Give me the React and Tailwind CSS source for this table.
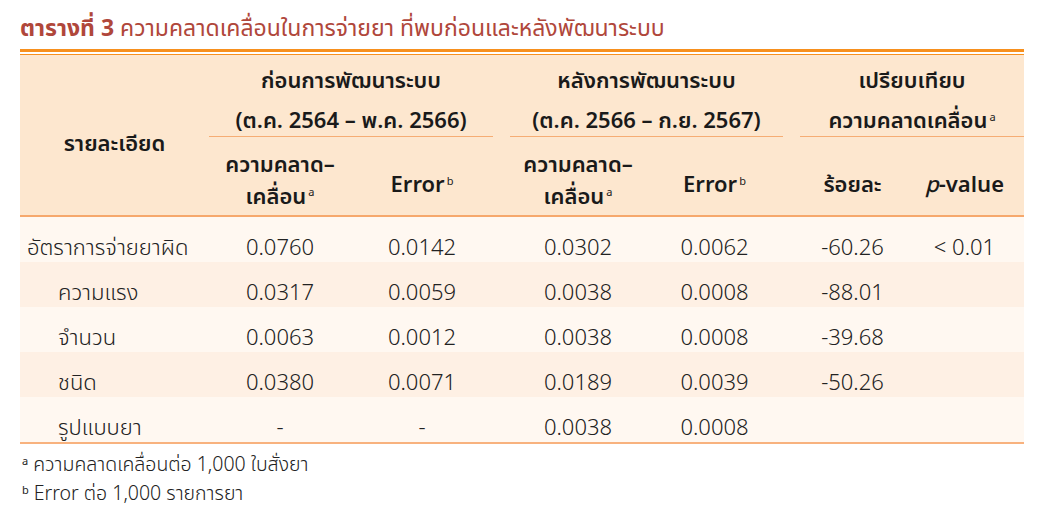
import React from "react";

const font = { fontFamily: '"Noto Sans Thai", "Noto Sans", "Liberation Sans", sans-serif' };

const rows = [
  { label: "อัตราการจ่ายยาผิด", indent: false, v: ["0.0760", "0.0142", "0.0302", "0.0062", "-60.26", "< 0.01"] },
  { label: "ความแรง", indent: true, v: ["0.0317", "0.0059", "0.0038", "0.0008", "-88.01", ""] },
  { label: "จำนวน", indent: true, v: ["0.0063", "0.0012", "0.0038", "0.0008", "-39.68", ""] },
  { label: "ชนิด", indent: true, v: ["0.0380", "0.0071", "0.0189", "0.0039", "-50.26", ""] },
  { label: "รูปแบบยา", indent: true, v: ["-", "-", "0.0038", "0.0008", "", ""] },
];

const cols = "grid grid-cols-[189px_142px_142px_17px_136px_137px_17px_105px_119px]";

function Sup({ children }) {
  return <span className="inline-block align-top text-[11px] leading-[12px] mt-[5px] ml-[2px] font-normal">{children}</span>;
}

export default function App() {
  return (
    <div className="w-[1042px] h-[523px] bg-white text-[#1a1a1a]" style={font}>
      <div className="px-5 pt-[12px]">
        <div className="h-[34px] text-[23px] leading-[34px] text-[#b0473b] whitespace-nowrap">
          <span className="font-bold">ตารางที่ 3</span> ความคลาดเคลื่อนในการจ่ายยา ที่พบก่อนและหลังพัฒนาระบบ
        </div>
        <div className="mt-[3px] w-[1004px]">
          <div className="h-[3px] bg-[#f7901e]" />
          <div className="h-[2px] bg-white" />
          <div className="h-px bg-[#f7901e]" />
          <div className={`${cols} bg-[#fde7cf] font-semibold text-[22px]`}>
            <div className="row-span-2 flex items-center justify-center pt-[19px] border-b-2 border-[#f6a86c]">รายละเอียด</div>
            <div className="col-span-2 h-[82px] flex flex-col items-center justify-start pt-[12px] gap-[10px] border-b border-[#f6ad74] leading-[30px]">
              <div>ก่อนการพัฒนาระบบ</div>
              <div>(ต.ค. 2564 – พ.ค. 2566)</div>
            </div>
            <div />
            <div className="col-span-2 h-[82px] flex flex-col items-center justify-start pt-[12px] gap-[10px] border-b border-[#f6ad74] leading-[30px]">
              <div>หลังการพัฒนาระบบ</div>
              <div>(ต.ค. 2566 – ก.ย. 2567)</div>
            </div>
            <div />
            <div className="col-span-2 h-[82px] flex flex-col items-center justify-start pt-[12px] gap-[10px] border-b border-[#f6ad74] leading-[30px]">
              <div>เปรียบเทียบ</div>
              <div>ความคลาดเคลื่อน<Sup>a</Sup></div>
            </div>
            <div className="h-[80px] flex items-center justify-center pt-[12px] text-center leading-[32px] border-b-2 border-[#f6a86c]">
              <div>ความคลาด–<br />เคลื่อน<Sup>a</Sup></div>
            </div>
            <div className="flex items-center justify-center pt-[18px] leading-[29px] border-b-2 border-[#f6a86c]">
              <span>Error<Sup>b</Sup></span>
            </div>
            <div className="border-b-2 border-[#f6a86c]" />
            <div className="flex items-center justify-center pt-[12px] text-center leading-[32px] border-b-2 border-[#f6a86c]">
              <div>ความคลาด–<br />เคลื่อน<Sup>a</Sup></div>
            </div>
            <div className="flex items-center justify-center pt-[18px] leading-[29px] border-b-2 border-[#f6a86c]">
              <span>Error<Sup>b</Sup></span>
            </div>
            <div className="border-b-2 border-[#f6a86c]" />
            <div className="flex items-center justify-center pt-[18px] leading-[29px] border-b-2 border-[#f6a86c]">ร้อยละ</div>
            <div className="flex items-center justify-center pt-[18px] leading-[29px] border-b-2 border-[#f6a86c]">
              <span><i className="font-medium">p</i>-value</span>
            </div>
          </div>
          <div className="border-b-2 border-[#f8b27e] font-light text-[22px] text-[#222]">
            {rows.map((r, i) => (
              <div key={i} className={`${cols} h-[45px] items-center pt-[18px] leading-[27px] ${i % 2 === 0 ? "bg-[#fff8f1]" : "bg-[#fef0e4]"}`}>
                <div className={`whitespace-nowrap ${r.indent ? "pl-[38px]" : "pl-[7px]"}`}>{r.label}</div>
                <div className="text-center">{r.v[0]}</div>
                <div className="text-center">{r.v[1]}</div>
                <div />
                <div className="text-center">{r.v[2]}</div>
                <div className="text-center">{r.v[3]}</div>
                <div />
                <div className="text-center">{r.v[4]}</div>
                <div className="text-center">{r.v[5]}</div>
              </div>
            ))}
          </div>
          <div className="text-[19.5px] font-light leading-[29px] pt-[7px] text-[#222]">
            <div><Sup>a</Sup> ความคลาดเคลื่อนต่อ 1,000 ใบสั่งยา</div>
            <div><Sup>b</Sup> Error ต่อ 1,000 รายการยา</div>
          </div>
        </div>
      </div>
    </div>
  );
}
